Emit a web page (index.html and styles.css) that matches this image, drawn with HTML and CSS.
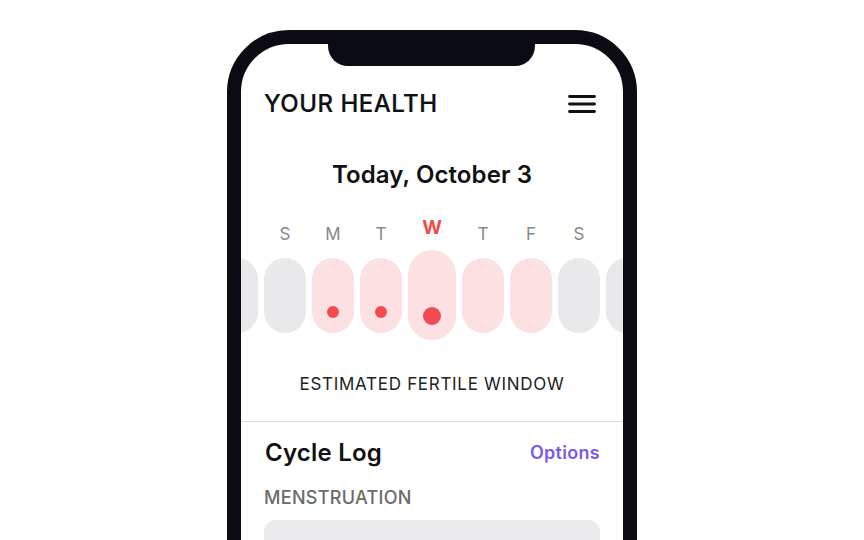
FILE: index.html
```html
<!DOCTYPE html>
<html lang="en">
<head>
<meta charset="utf-8">
<title>Your Health</title>
<link rel="stylesheet" href="styles.css">
</head>
<body>
<div class="stage">
  <div class="phone">
    <div class="notch"></div>
    <div class="screen">
      <header class="top">
        <h1 class="title">YOUR HEALTH</h1>
        <svg class="menu" width="28" height="18" viewBox="0 0 28 18" aria-label="Menu">
          <path d="M1.5 1.5H26.5M1.5 9H26.5M1.5 16.5H26.5" stroke="#111" stroke-width="2.8" stroke-linecap="round" fill="none"/>
        </svg>
      </header>
      <h2 class="date">Today, October 3</h2>
      <div class="letters">
        <span class="letter">S</span>
        <span class="letter">M</span>
        <span class="letter">T</span>
        <span class="letter today">W</span>
        <span class="letter">T</span>
        <span class="letter">F</span>
        <span class="letter">S</span>
      </div>
      <div class="pills">
        <div class="pill"></div>
        <div class="pill"></div>
        <div class="pill fertile"><span class="dot"></span></div>
        <div class="pill fertile"><span class="dot"></span></div>
        <div class="pill fertile current"><span class="dot big"></span></div>
        <div class="pill fertile"></div>
        <div class="pill fertile"></div>
        <div class="pill"></div>
        <div class="pill"></div>
      </div>
      <p class="legend">ESTIMATED FERTILE WINDOW</p>
      <hr class="divider">
      <section class="log">
        <div class="log-head">
          <h3 class="log-title">Cycle Log</h3>
          <a class="options">Options</a>
        </div>
        <div class="label">MENSTRUATION</div>
        <div class="field"></div>
      </section>
    </div>
  </div>
</div>
</body>
</html>
```

FILE: styles.css
```css
* { box-sizing: border-box; }
html, body {
  margin: 0;
  padding: 0;
  background: #ffffff;
  font-family: "Inter", "Noto Sans", "Liberation Sans", sans-serif;
  overflow: hidden;
  height: 540px;
}
.stage {
  display: flex;
  justify-content: center;
  padding-top: 30px;
}
.phone {
  position: relative;
  width: 410px;
  height: 580px;
  border: 14px solid #0b0b13;
  border-radius: 62px;
  background: #fff;
}
.notch {
  position: absolute;
  top: 0;
  left: 87px;
  width: 207px;
  height: 22px;
  background: #0b0b13;
  border-radius: 0 0 20px 20px;
  z-index: 2;
}
.screen {
  height: 100%;
  border-radius: 48px;
  overflow: hidden;
  padding-top: 45px;
  display: flex;
  flex-direction: column;
}
.top {
  display: flex;
  justify-content: space-between;
  align-items: center;
  height: 30px;
  padding: 0 27px 0 23px;
}
.title {
  margin: 0;
  font-size: 24px;
  line-height: 30px;
  font-weight: 500;
  color: #0f0f14;
  letter-spacing: 0.5px;
  -webkit-text-stroke: 0.2px #0f0f14;
}
.menu { display: block; }
.date {
  margin: 42px 0 0;
  text-align: center;
  font-size: 24px;
  line-height: 28px;
  font-weight: 600;
  color: #111;
  letter-spacing: 0.1px;
}
.letters {
  margin-top: 29px;
  display: flex;
  justify-content: center;
  align-items: flex-end;
  gap: 6px;
}
.letter {
  width: 42px;
  text-align: center;
  font-size: 17px;
  line-height: 20px;
  color: #888;
}
.letter.today {
  width: 48px;
  font-size: 19px;
  font-weight: 700;
  color: #ef4b51;
  padding-bottom: 6px;
}
.pills {
  margin-top: 6px;
  display: flex;
  justify-content: center;
  align-items: center;
  gap: 6px;
  height: 90px;
}
.pill {
  flex: 0 0 42px;
  height: 75px;
  border-radius: 21px;
  background: #e9e9ec;
  display: flex;
  flex-direction: column;
  justify-content: flex-end;
  align-items: center;
  padding-bottom: 15px;
}
.pill.fertile { background: #fde0e2; }
.pill.current {
  flex-basis: 48px;
  height: 90px;
  border-radius: 24px;
}
.dot {
  width: 12px;
  height: 12px;
  border-radius: 50%;
  background: #f24a50;
}
.dot.big { width: 18px; height: 18px; }
.legend {
  margin: 34px 0 0;
  text-align: center;
  font-size: 17px;
  line-height: 20px;
  color: #222;
  letter-spacing: 0.7px;
}
.divider {
  margin: 27px 0 0;
  border: 0;
  height: 1px;
  background: #dcdcde;
}
.log { padding: 0 23px 0 24px; }
.log-head {
  margin-top: 16px;
  display: flex;
  justify-content: space-between;
  align-items: center;
}
.log-title {
  margin: 0;
  font-size: 24px;
  line-height: 30px;
  font-weight: 600;
  color: #111;
  letter-spacing: 0.2px;
}
.options {
  font-size: 18px;
  line-height: 22px;
  font-weight: 600;
  color: #7a5ae8;
  letter-spacing: 0.3px;
}
.label {
  margin-top: 20px;
  margin-left: -1px;
  font-size: 18px;
  line-height: 20px;
  font-weight: 500;
  color: #6b6b6b;
  letter-spacing: 0.3px;
}
.field {
  margin-top: 12px;
  margin-left: -1px;
  height: 60px;
  border-radius: 12px;
  background: #ebebee;
}
```
